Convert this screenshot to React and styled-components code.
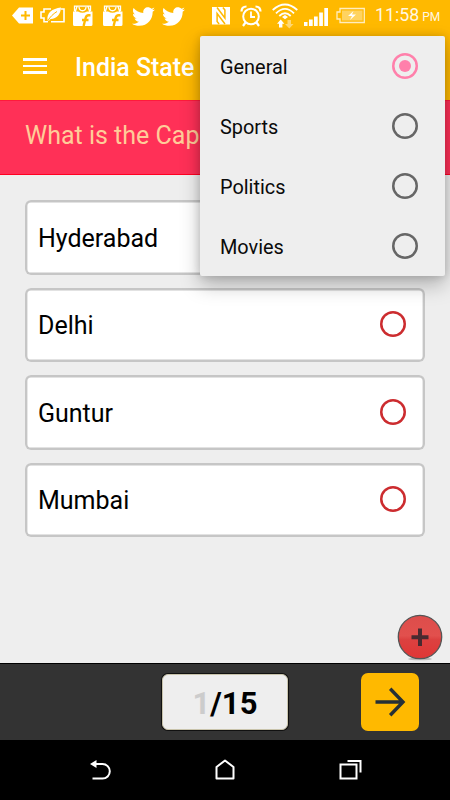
import { useState } from 'react';
import styled, { createGlobalStyle } from 'styled-components';
import { FaTwitter } from 'react-icons/fa';

const GlobalStyle = createGlobalStyle`
  * {
    box-sizing: border-box;
  }

  body {
    margin: 0;
    font-family: Roboto, sans-serif;
    background: #eeeeee;
  }

  button {
    font-family: inherit;
    padding: 0;
    cursor: pointer;
  }

  svg {
    display: block;
    flex: none;
    overflow: visible;
  }
`;

const Screen = styled.div`
  position: relative;
  display: flex;
  flex-direction: column;
  width: 450px;
  height: 800px;
  overflow: hidden;
  background: #eeeeee;
`;

const Header = styled.header`
  height: 100px;
  background: #ffb900;
  color: white;
`;

const StatusBar = styled.div`
  display: flex;
  justify-content: space-between;
  height: 32px;
  padding: 0 10px 0 12px;
`;

const StatusGroup = styled.div`
  display: flex;
  align-items: center;
  gap: ${({ $gap }) => $gap}px;
`;

const Clock = styled.span`
  margin-left: 2px;
  width: 65px;
  font-size: 17.8px;
  line-height: 35px;
  white-space: nowrap;
  color: rgba(255, 255, 255, 0.9);

  small {
    margin-left: 3px;
    font-size: 12px;
  }
`;

const Toolbar = styled.div`
  display: flex;
  align-items: center;
  gap: 28px;
  height: 68px;
  padding: 2px 23px 0;
`;

const MenuButton = styled.button`
  display: flex;
  flex-direction: column;
  gap: 4px;
  width: 24px;
  margin-top: -2px;
  border: 0;
  background: none;

  span {
    height: 2.5px;
    background: white;
  }
`;

const Title = styled.h1`
  margin: 0;
  font-size: 24.9px;
  font-weight: 500;
`;

const Question = styled.div`
  height: 75px;
  padding: 20px 25px;
  background: #ff3057;
  border-top: 1px solid #ff1a3c;
  border-bottom: 1px solid #ff0022;
  color: #ffcc99;
  font-size: 25px;
  line-height: 30px;
`;

const Answers = styled.main`
  flex: 1;
  display: flex;
  flex-direction: column;
  gap: 13px;
  padding: 25px;
`;

const Answer = styled.button`
  display: flex;
  align-items: center;
  justify-content: space-between;
  height: 74.5px;
  padding: 2px 19px 0 13px;
  border: 0;
  border-radius: 6px;
  box-shadow: inset 0 0 0 2.4px #c6c6c6;
  background: white;
  color: black;
  font-size: 25px;
`;

const Radio = styled.span`
  display: flex;
  align-items: center;
  justify-content: center;
  width: 26px;
  height: 26px;
  margin-top: -3px;
  border-radius: 50%;
  box-shadow: inset 0 0 0 2.5px ${({ $color }) => $color};

  &::after {
    content: '';
    display: ${({ $checked }) => ($checked ? 'block' : 'none')};
    width: 12px;
    height: 12px;
    border-radius: 50%;
    background: ${({ $color }) => $color};
  }
`;

const Menu = styled.div`
  position: absolute;
  top: 36px;
  right: 5px;
  width: 245px;
  height: 240px;
  border-radius: 2px;
  background: #eeeeee;
  box-shadow: 0 9px 20px rgba(0, 0, 0, 0.26), 0 0 8px rgba(0, 0, 0, 0.16);
`;

const MenuItem = styled.button`
  display: flex;
  align-items: center;
  justify-content: space-between;
  width: 100%;
  height: 60px;
  padding: 3px 27px 0 20px;
  border: 0;
  background: none;
  color: #0a0a0a;
  font-size: 19.9px;
`;

const AddButton = styled.button`
  position: absolute;
  left: 397px;
  top: 614px;
  border: 0;
  background: none;
`;

const Footer = styled.footer`
  display: grid;
  grid-template-columns: 1fr 126px 1fr;
  align-items: center;
  height: 77px;
  border-top: 1px solid black;
  background: #333333;
`;

const Counter = styled.div`
  grid-column: 2;
  height: 56px;
  border: 1px solid #c9c4ac;
  border-radius: 6px;
  box-shadow: 0 0 0 1px #111111;
  background: #eeeeee;
  color: black;
  font-size: 31px;
  font-weight: 700;
  line-height: 57px;
  text-align: center;

  span {
    color: #cccccc;
  }
`;

const NextButton = styled.button`
  justify-self: end;
  display: flex;
  align-items: center;
  justify-content: center;
  width: 58px;
  height: 58px;
  margin-right: 31px;
  border: 0;
  border-radius: 7px;
  background: #ffb900;
`;

const NavBar = styled.nav`
  display: flex;
  justify-content: space-between;
  align-items: center;
  height: 60px;
  padding: 0 88px;
  background: black;
`;

const TagIcon = () => (
  <svg width="21" height="20" viewBox="0 0 21 20">
    <path fill="white" d="M0 9.500 7 1.500h14v16H7z" />
    <path stroke="#ffb900" strokeWidth="2" d="M13.500 5v9M9 9.500h9" />
  </svg>
);

const LeafBatteryIcon = () => (
  <svg width="25" height="20" viewBox="0 0 25 20" fill="none" stroke="white" strokeWidth="1.600">
    <path d="M11 3H4v3H1v6h3v3.700h4M21 3h3v12.700H11" />
    <path fill="white" stroke="none" d="M7.500 14.500C6.500 7 12 2.500 21 1.500c-.5 7-4 11-10.500 11.500l-1.500 1.800z" />
    <path stroke="#ffb900" strokeWidth="1" d="M8 14.500C10 11 13 8 17 5.500" />
  </svg>
);

const BagIcon = () => (
  <svg width="23" height="20" viewBox="0 0 23 20">
    <path fill="none" stroke="white" strokeWidth="1.300" d="M2.500 5V.2h16V5M5 .5l-2 6M16 .5l2 6M7 1c.5 5 6.500 5 7 0" />
    <path fill="white" d="M1 5.500h5q4.500 2.500 9 0h5.500v13q0 1.500-1.500 1.500H2.500Q1 20 1 18.500z" />
    <path fill="none" stroke="#ffb900" strokeWidth="2.400" d="M18.500 9.200h-2c-2 0-2.400.8-2.900 2.800L11.600 20M10 14h6.500" />
  </svg>
);

const NfcIcon = () => (
  <svg width="20" height="20" viewBox="0 0 20 20">
    <path fill="white" d="M0 1h18v17.500H0z" />
    <path fill="none" stroke="#ffb900" strokeWidth="1.500" d="M5 1.500 12.900 12V4l-2-2.500M13 18 5.100 7.500v8l2 2.500" />
  </svg>
);

const AlarmIcon = () => (
  <svg width="24" height="22" viewBox="0 0 24 22" fill="none" stroke="white">
    <circle cx="11" cy="11.500" r="7.800" strokeWidth="2" />
    <path strokeWidth="2.200" d="M1.500 6.500c0-3 2-5 5-5M20.500 6.500c0-3-2-5-5-5M5.500 17.500 3 21M16.500 17.500 19 21" />
    <path strokeWidth="1.800" d="M11 6.500V12h4" />
  </svg>
);

const WifiIcon = () => (
  <svg width="24" height="26" viewBox="0 0 24 26" fill="none" stroke="white" strokeWidth="1.800">
    <path d="M.7 7Q13-4 25.300 7M4 10.300Q13 1.500 22 10.300M7.300 13Q13 7.500 18.700 13" />
    <path fill="white" stroke="none" d="m10 14 3-2 3 2-3 2.300zM8.700 16.500l3.700 4.200h-2V24.500H7v-3.800H5z" />
    <path fill="white" fillOpacity=".45" stroke="none" d="M15.500 17h3.500v4h2.500l-4.200 4.500-4.300-4.500h2.500z" />
  </svg>
);

const SignalIcon = () => (
  <svg width="24" height="20" viewBox="0 0 24 20" fill="white">
    <path d="M0 16h3.500v4H0zM5 13.500h3.700V20H5zM10 10.500h3.700V20H10zM15.200 6.500h3.700V20h-3.700zM20.300 2H24v18h-3.700z" />
  </svg>
);

const ChargingIcon = () => (
  <svg width="29" height="18" viewBox="0 0 29 18">
    <g opacity=".75">
      <path fill="none" stroke="white" strokeWidth="1.300" d="M4 1.500h24.300v14H4v-3.500H1V5h3z" />
      <path fill="white" fillOpacity=".5" d="M6 3.500h20.500v10H6z" />
    </g>
    <path fill="white" d="m17.500 4-5.500 5h4l-2 4 6-5.500h-4z" />
  </svg>
);

const ArrowIcon = () => (
  <svg width="32" height="30" viewBox="0 0 32 30" fill="none" stroke="#263036" strokeWidth="3.400">
    <path d="M1.500 15h27M16.200 1.800 29 15 16.200 28.200" />
  </svg>
);

const PlusIcon = () => (
  <svg width="46" height="48" viewBox="0 0 46 48">
    <defs>
      <linearGradient id="ball" x1="0" y1="0" x2="0" y2="1">
        <stop offset="0" stopColor="#dc4d4b" />
        <stop offset=".47" stopColor="#e2504d" />
        <stop offset=".56" stopColor="#dc4140" />
        <stop offset="1" stopColor="#e03635" />
      </linearGradient>
    </defs>
    <ellipse cx="23" cy="45" rx="12" ry="1.300" fill="#bbb" />
    <circle cx="23" cy="23" r="21.700" fill="url(#ball)" stroke="#555" strokeWidth="1.300" />
    <path stroke="#482a30" strokeWidth="4" d="M23 14.500v17.500M14.500 23.300h17" />
  </svg>
);

const BackIcon = () => (
  <svg width="24" height="22" viewBox="0 0 24 22">
    <path fill="white" d="M2 5 8.500 1v8z" />
    <path fill="none" stroke="white" strokeWidth="2" d="M7 5h7.500a7.300 7.300 0 0 1 0 14.600H4.500" />
  </svg>
);

const HomeIcon = () => (
  <svg width="20" height="22" viewBox="0 0 20 22" fill="none" stroke="white" strokeWidth="2">
    <path strokeLinejoin="round" d="M1.500 8 10 1.500 18.500 8v11.500h-17z" />
  </svg>
);

const RecentsIcon = () => (
  <svg width="24" height="22" viewBox="0 0 24 22" fill="none" stroke="white" strokeWidth="2">
    <path d="M2.500 5.500h16v14h-16zM9.500 2H22.500v11.500" />
  </svg>
);

const categories = ['General', 'Sports', 'Politics', 'Movies'];
const answers = ['Hyderabad', 'Delhi', 'Guntur', 'Mumbai'];

function App() {
  const [category, setCategory] = useState('General');
  const [answer, setAnswer] = useState(null);

  return (
    <>
      <GlobalStyle />
      <Screen>
        <Header>
          <StatusBar>
            <StatusGroup $gap={7}>
              <TagIcon />
              <LeafBatteryIcon />
              <BagIcon />
              <BagIcon />
              <FaTwitter size={23} />
              <FaTwitter size={23} />
            </StatusGroup>
            <StatusGroup $gap={8}>
              <NfcIcon />
              <AlarmIcon />
              <WifiIcon />
              <SignalIcon />
              <ChargingIcon />
              <Clock>
                11:58<small>PM</small>
              </Clock>
            </StatusGroup>
          </StatusBar>
          <Toolbar>
            <MenuButton aria-label="Open menu">
              <span />
              <span />
              <span />
            </MenuButton>
            <Title>India State</Title>
          </Toolbar>
        </Header>

        <Question>What is the Cap</Question>

        <Answers>
          {answers.map((name) => (
            <Answer key={name} onClick={() => setAnswer(name)}>
              {name}
              <Radio $color="#cc2c2f" $checked={answer === name} />
            </Answer>
          ))}
        </Answers>

        <Footer>
          <Counter>
            <span>1</span>/15
          </Counter>
          <NextButton aria-label="Next question">
            <ArrowIcon />
          </NextButton>
        </Footer>

        <NavBar>
          <BackIcon />
          <HomeIcon />
          <RecentsIcon />
        </NavBar>

        <AddButton aria-label="Add">
          <PlusIcon />
        </AddButton>

        <Menu>
          {categories.map((name) => (
            <MenuItem key={name} onClick={() => setCategory(name)}>
              {name}
              <Radio
                $color={category === name ? '#ff80ab' : '#666666'}
                $checked={category === name}
              />
            </MenuItem>
          ))}
        </Menu>
      </Screen>
    </>
  );
}

export default App;
